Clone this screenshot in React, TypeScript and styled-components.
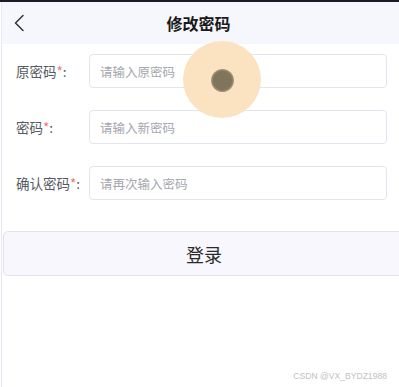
import React from "react";
import styled, { createGlobalStyle } from "styled-components";

const Global = createGlobalStyle`
  html, body { margin: 0; padding: 0; background: #ffffff; overflow: hidden; }
  body { font-family: "Noto Sans CJK SC", "Noto Sans", sans-serif; }
  * { box-sizing: border-box; }
`;

const Screen = styled.div`
  position: relative;
  width: 399px;
  height: 387px;
  overflow: hidden;
  background: #ffffff;
  display: flex;
  flex-direction: column;
`;

const StatusStrip = styled.div`
  height: 2px;
  background: #1c1c28;
  flex-shrink: 0;
`;

const Page = styled.div`
  flex: 1;
  margin-left: 1px;
  border-left: 1px solid #e6e6f4;
  display: flex;
  flex-direction: column;
`;

const Header = styled.header`
  height: 42px;
  background: #f6f6fd;
  display: grid;
  grid-template-columns: 40px 1fr 40px;
  align-items: center;
`;

const BackButton = styled.button`
  border: none;
  background: none;
  padding: 0 0 0 11px;
  height: 42px;
  display: flex;
  align-items: center;
  cursor: pointer;
`;

const Title = styled.h1`
  margin: 0 4px 0 0;
  text-align: center;
  font-size: 16px;
  font-weight: 700;
  color: #1a1a1a;
  line-height: 42px;
`;

const Form = styled.form`
  display: flex;
  flex-direction: column;
  gap: 22px;
  padding: 10px 12px 0 14px;
`;

const Row = styled.div`
  display: flex;
  align-items: center;
  height: 34px;
`;

const Label = styled.label`
  width: 73px;
  flex-shrink: 0;
  font-size: 13.5px;
  color: #555a62;
  white-space: nowrap;
`;

const Star = styled.span`
  color: #f07070;
`;

const Input = styled.input`
  flex: 1;
  height: 34px;
  border: 1px solid #e3e5ee;
  border-radius: 4px;
  padding: 0 10px;
  font-family: "Noto Sans CJK SC", "Noto Sans", sans-serif;
  font-size: 12.5px;
  color: #333;
  background: #fff;
  outline: none;
  &::placeholder { color: #a4a7ae; }
`;

const SubmitButton = styled.button`
  margin: 31px -6px 0 1px;
  height: 45px;
  border: 1px solid #e2e2ee;
  border-radius: 5px;
  background: #f7f7fd;
  font-family: "Noto Sans CJK SC", "Noto Sans", sans-serif;
  font-size: 18px;
  color: #2a2a2a;
  cursor: pointer;
`;

const Watermark = styled.div`
  position: absolute;
  right: 12px;
  bottom: 6px;
  font-family: "Liberation Sans", Arial, sans-serif;
  font-size: 8.6px;
  color: #c2c2c2;
`;

const TouchRing = styled.div`
  position: absolute;
  left: 183px;
  top: 41px;
  width: 78px;
  height: 77px;
  border-radius: 50%;
  background: #fbe3c1;
  display: flex;
  align-items: center;
  justify-content: center;
  pointer-events: none;
`;

const TouchDot = styled.div`
  width: 23px;
  height: 23px;
  border-radius: 50%;
  background: radial-gradient(circle, #7f745c 0 9px, #a09277 11px, #c4b393 12px);
  margin-top: 2px;
`;

const fields = [
  { label: "原密码", placeholder: "请输入原密码" },
  { label: "密码", placeholder: "请输入新密码" },
  { label: "确认密码", placeholder: "请再次输入密码" },
];

export default function App() {
  return (
    <>
      <Global />
      <Screen>
        <StatusStrip />
        <Page>
          <Header>
            <BackButton type="button" aria-label="返回">
              <svg width="12" height="18" viewBox="0 0 12 18" fill="none">
                <path d="M10 1.5 L2.5 9 L10 16.5" stroke="#333" strokeWidth="1.5" strokeLinecap="round" strokeLinejoin="round" />
              </svg>
            </BackButton>
            <Title>修改密码</Title>
            <span />
          </Header>
          <Form onSubmit={(e) => e.preventDefault()}>
            {fields.map((f) => (
              <Row key={f.label}>
                <Label>
                  {f.label}
                  <Star>*</Star>:
                </Label>
                <Input type="password" placeholder={f.placeholder} />
              </Row>
            ))}
          </Form>
          <SubmitButton type="button">登录</SubmitButton>
        </Page>
        <TouchRing>
          <TouchDot />
        </TouchRing>
        <Watermark>CSDN @VX_BYDZ1988</Watermark>
      </Screen>
    </>
  );
}
